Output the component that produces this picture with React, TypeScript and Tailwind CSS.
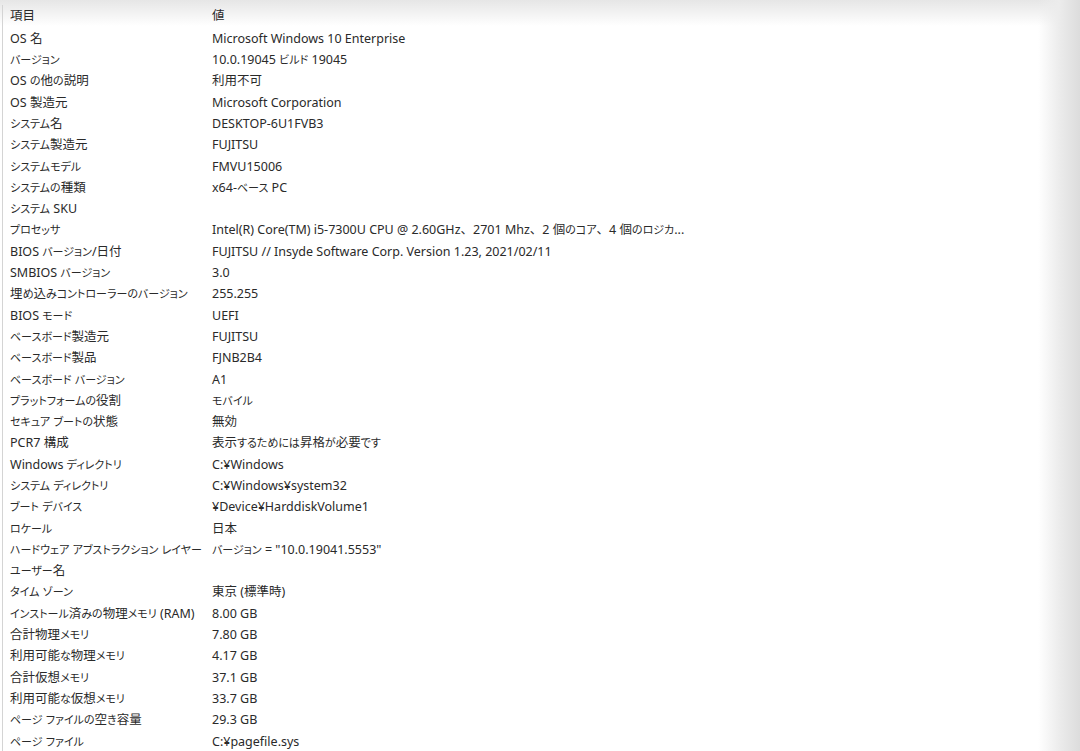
import React from "react";

const rows: [string, string][] = [
  ["OS 名", "Microsoft Windows 10 Enterprise"],
  ["バージョン", "10.0.19045 ビルド 19045"],
  ["OS の他の説明", "利用不可"],
  ["OS 製造元", "Microsoft Corporation"],
  ["システム名", "DESKTOP-6U1FVB3"],
  ["システム製造元", "FUJITSU"],
  ["システムモデル", "FMVU15006"],
  ["システムの種類", "x64-ベース PC"],
  ["システム SKU", ""],
  ["プロセッサ", "Intel(R) Core(TM) i5-7300U CPU @ 2.60GHz、2701 Mhz、2 個のコア、4 個のロジカ..."],
  ["BIOS バージョン/日付", "FUJITSU // Insyde Software Corp. Version 1.23, 2021/02/11"],
  ["SMBIOS バージョン", "3.0"],
  ["埋め込みコントローラーのバージョン", "255.255"],
  ["BIOS モード", "UEFI"],
  ["ベースボード製造元", "FUJITSU"],
  ["ベースボード製品", "FJNB2B4"],
  ["ベースボード バージョン", "A1"],
  ["プラットフォームの役割", "モバイル"],
  ["セキュア ブートの状態", "無効"],
  ["PCR7 構成", "表示するためには昇格が必要です"],
  ["Windows ディレクトリ", "C:¥Windows"],
  ["システム ディレクトリ", "C:¥Windows¥system32"],
  ["ブート デバイス", "¥Device¥HarddiskVolume1"],
  ["ロケール", "日本"],
  ["ハードウェア アブストラクション レイヤー", "バージョン = \"10.0.19041.5553\""],
  ["ユーザー名", ""],
  ["タイム ゾーン", "東京 (標準時)"],
  ["インストール済みの物理メモリ (RAM)", "8.00 GB"],
  ["合計物理メモリ", "7.80 GB"],
  ["利用可能な物理メモリ", "4.17 GB"],
  ["合計仮想メモリ", "37.1 GB"],
  ["利用可能な仮想メモリ", "33.7 GB"],
  ["ページ ファイルの空き容量", "29.3 GB"],
  ["ページ ファイル", "C:¥pagefile.sys"],
];

// Yu Gothic UI draws kana small and narrow; shrink kana runs to match
function Text({ s }: { s: string }) {
  const parts = s.split(/([\u3040-\u30ff]+|、)/);
  return (
    <>
      {parts.map((p, i) => {
        if (i % 2 === 0) return <React.Fragment key={i}>{p}</React.Fragment>;
        if (p === "、")
          return (
            <span key={i} className="[font-feature-settings:normal]">
              {p}
            </span>
          );
        return (
          <span key={i} className="text-[11px]">
            {p}
          </span>
        );
      })}
    </>
  );
}

export default function App() {
  return (
    <div className="relative h-[751px] w-[1080px] overflow-hidden bg-white text-[12.5px] text-[#2a2a2a] [font-family:'Noto_Sans','Noto_Sans_CJK_JP',sans-serif] [font-feature-settings:'palt']">
      {/* soft photo edges */}
      <div className="pointer-events-none absolute inset-x-0 top-0 h-[26px] bg-gradient-to-b from-[#e6e6e6] to-white/0" />
      <div className="pointer-events-none absolute inset-y-0 right-0 w-[42px] bg-gradient-to-r from-white/0 via-[#ececec] to-[#dcdcdc]" />

      <div className="relative ml-[2px] mt-[9px] border-l border-[#d4d4d4] pl-[7px]">
        <div className="-mt-[4px] grid h-[23.5px] grid-cols-[202px_1fr] items-center">
          <span>項目</span>
          <span>値</span>
        </div>
        {rows.map(([k, v], i) => (
          <div key={i} className="grid h-[21.3px] grid-cols-[202px_1fr] items-center whitespace-nowrap">
            <span>
              <Text s={k} />
            </span>
            <span>
              <Text s={v} />
            </span>
          </div>
        ))}
      </div>
    </div>
  );
}
